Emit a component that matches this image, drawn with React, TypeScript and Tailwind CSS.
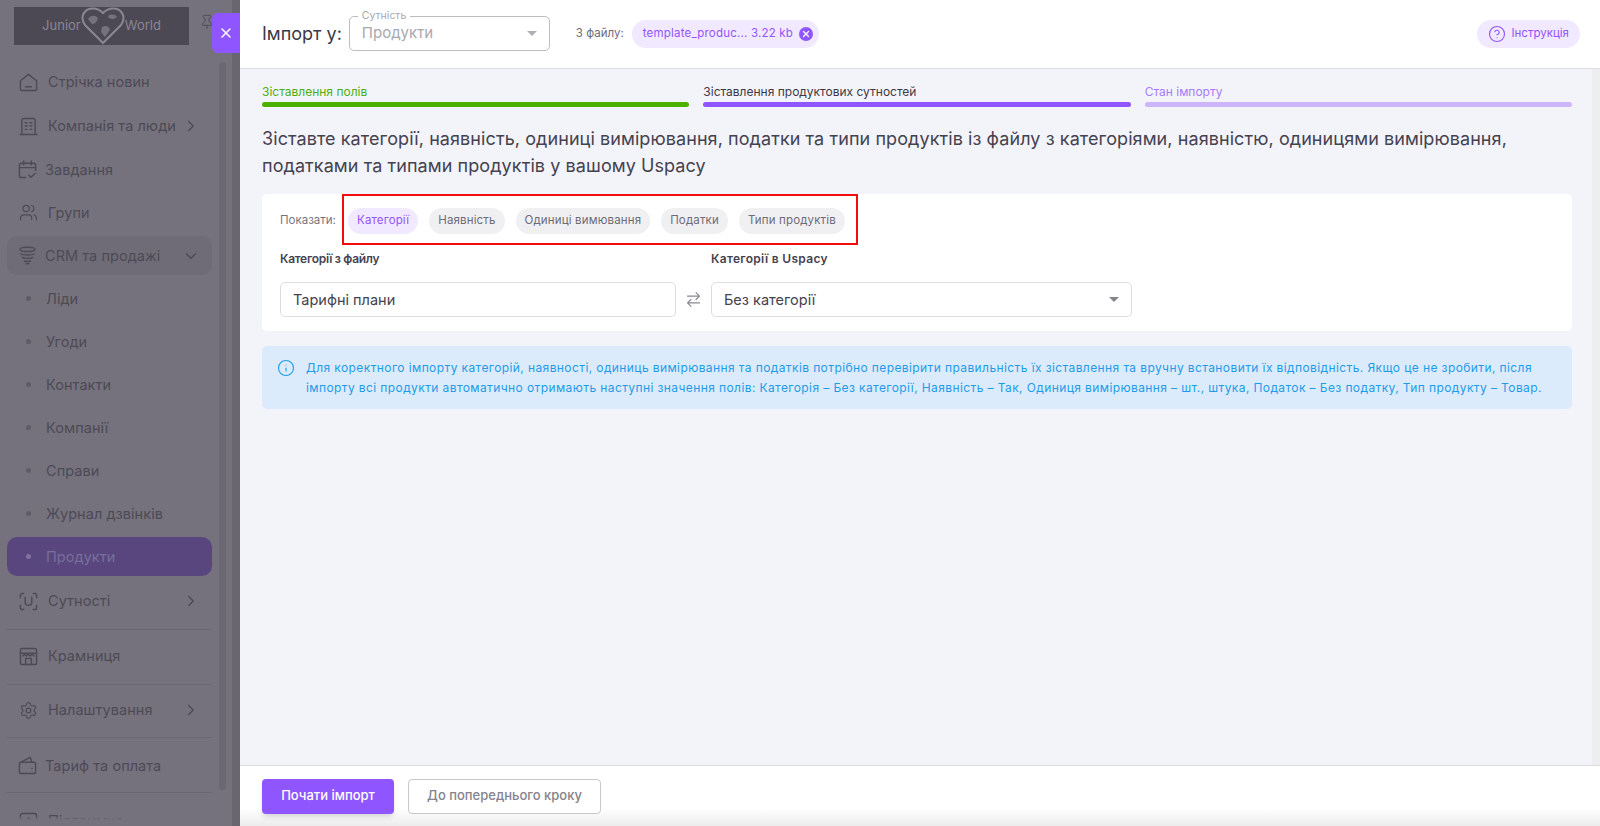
import React from "react";
import { ChevronDown, ChevronRight, CircleHelp, Info, Pin, Settings, Users, X } from "lucide-react";

const iconCls = "w-[19px] h-[19px] shrink-0";

function Glyph({ children }: { children: React.ReactNode }) {
  return (
    <svg viewBox="0 0 20 20" className={iconCls} fill="none" stroke="currentColor" strokeWidth="1.5" strokeLinecap="round" strokeLinejoin="round">
      {children}
    </svg>
  );
}
const HomeIcon = () => (
  <Glyph>
    <path d="M1.5 8.2 10 1.5l8.5 6.7v8.3a2 2 0 0 1-2 2h-13a2 2 0 0 1-2-2z" />
    <path d="M7 14.5h6" />
  </Glyph>
);
const BuildingIcon = () => (
  <Glyph>
    <path d="M3 18V3.5a2 2 0 0 1 2-2h10a2 2 0 0 1 2 2V18M1 18.5h18" />
    <path d="M6.5 6h2M11.5 6h2M6.5 9.5h2M11.5 9.5h2M6.5 13h2M11.5 13h2" />
  </Glyph>
);
const CalendarIcon = () => (
  <Glyph>
    <path d="M8 18.5H3.5a2 2 0 0 1-2-2v-11a2 2 0 0 1 2-2h13a2 2 0 0 1 2 2V11M1.5 8h17M6 1v4M14 1v4" />
    <path d="m11.5 16 2.2 2.2 4.3-4" />
  </Glyph>
);
const StackIcon = () => (
  <Glyph>
    <ellipse cx="10" cy="3.6" rx="7.8" ry="2.2" />
    <path d="M3 8.4c2 1.4 12 1.4 14 0M4.8 12.2c2 1.1 8.4 1.1 10.4 0M6.8 15.8c1.4.7 5 .7 6.4 0M8.6 18.6h2.8" />
  </Glyph>
);
const ScanIcon = () => (
  <Glyph>
    <path d="M5 1.5H3.5a2 2 0 0 0-2 2V6M15 1.5h1.5a2 2 0 0 1 2 2V6M5 18.5H3.5a2 2 0 0 1-2-2V14M15 18.5h1.5a2 2 0 0 0 2-2V14" />
    <path d="M6.5 5.5v5a3.5 3.5 0 0 0 7 0v-5" />
  </Glyph>
);
const StoreIcon = () => (
  <Glyph>
    <rect x="1.5" y="1.5" width="17" height="17" rx="2" />
    <path d="M1.5 6.5h17M4 9.5l2-2 2 2 2-2 2 2 2-2 2 2" />
    <path d="M7 18.5V12h6v6.5" />
  </Glyph>
);
const WalletIcon = () => (
  <Glyph>
    <rect x="1.5" y="6.5" width="17" height="12" rx="2" />
    <path d="M3 6.5 13 1.5l1.5 5" />
    <path d="M14.5 13h.5" />
  </Glyph>
);
const SupportIcon = () => (
  <Glyph>
    <rect x="1.5" y="1.5" width="17" height="15" rx="2.5" />
    <path d="m7 9 3-3 3 3" />
  </Glyph>
);

type Row = { label: string; h: string; icon?: React.ReactNode; chevron?: "right" | "down"; sub?: boolean; active?: boolean; hover?: boolean; divider?: boolean; tight?: boolean; pb?: string };

const rows: Row[] = [
  { label: "Стрічка новин", h: "h-[44px]", icon: <HomeIcon /> },
  { label: "Компанія та люди", h: "h-[44px]", icon: <BuildingIcon />, chevron: "right" },
  { label: "Завдання", h: "h-[43px]", icon: <CalendarIcon />, tight: true },
  { label: "Групи", h: "h-[43px]", icon: <Users className={iconCls} strokeWidth={1.5} /> },
  { label: "CRM та продажі", h: "h-[43px]", icon: <StackIcon />, chevron: "down", hover: true, tight: true },
  { label: "Ліди", h: "h-[43px]", sub: true },
  { label: "Угоди", h: "h-[43px]", sub: true },
  { label: "Контакти", h: "h-[43px]", sub: true },
  { label: "Компанії", h: "h-[43px]", sub: true },
  { label: "Справи", h: "h-[43px]", sub: true },
  { label: "Журнал дзвінків", h: "h-[43px]", sub: true },
  { label: "Продукти", h: "h-[43px]", sub: true, active: true },
  { label: "Сутності", h: "h-[52px]", icon: <ScanIcon />, chevron: "right", divider: true, pb: "pb-[6px]" },
  { label: "Крамниця", h: "h-[55px]", icon: <StoreIcon />, divider: true, pb: "pb-[3px]" },
  { label: "Налаштування", h: "h-[53px]", icon: <Settings className={iconCls} strokeWidth={1.5} />, chevron: "right", divider: true, pb: "pb-[3px]" },
  { label: "Тариф та оплата", h: "h-[55px]", icon: <WalletIcon />, divider: true, tight: true },
  { label: "Підтримка", h: "h-[56px]", icon: <SupportIcon /> },
];

function Sidebar() {
  return (
    <aside className="w-[240px] shrink-0 h-full bg-[#75727d] text-[#4d4a56] flex flex-col overflow-hidden relative">
      <div className="h-[60px] shrink-0 pt-[7px] pl-[14px] flex items-start">
        <div className="w-[175px] h-[38px] bg-[#4c4854] flex items-center justify-center text-[13px] text-[#8a8792]">
          <span>Junior</span>
          <svg viewBox="0 0 44 38" className="w-[44px] h-[38px]">
            <path d="M22 36 4 18C-2 9 4 1.500 12 1.500c4.500 0 7.500 2 10 4.500 2.500-2.500 5.500-4.500 10-4.500 8 0 14 7.500 8 16.500z" fill="#4c4854" stroke="#8a8792" strokeWidth="2" />
            <path d="M21 20c4-2 7-1 8 3l-5 7-4-5zM7 12c3-4 7-4 10-1-1 4-3 6-6 6zM27 9c3-2 7-2 9 1-2 2-5 3-8 1z" fill="#75727d" />
          </svg>
          <span>World</span>
        </div>
        <Pin className="w-[16px] h-[16px] ml-[10px] mt-[7px] text-[#4f4c58]" strokeWidth={1.5} />
      </div>
      <div className="flex-1 min-h-0 flex flex-col pl-[7px]">
        {rows.map((r) => (
          <div key={r.label} className={`${r.h} ${r.pb ?? ""} shrink-0 w-[205px] relative flex items-center`}>
            <div className={`w-full flex items-center rounded-[10px] h-[39px] ${r.active ? "bg-[#5a467f] text-[#75709a]" : ""} ${r.hover ? "bg-[#6f6c77]" : ""} ${r.sub ? "pl-[19px]" : r.tight ? "pl-[11px]" : "pl-[12px]"} pr-[12px]`}>
              {r.sub ? (
                <span className={`w-[5px] h-[5px] rounded-full ${r.active ? "bg-[#85719f]" : "bg-[#5f5c68]"} mr-[15px]`} />
              ) : (
                <span className="w-[19px] flex justify-center shrink-0">{r.icon}</span>
              )}
              <span className={`text-[14.5px] tracking-[0.05px] whitespace-nowrap ${r.sub ? "" : r.tight ? "ml-[8px]" : "ml-[10px]"}`}>{r.label}</span>
              {r.chevron === "right" && <ChevronRight className="w-[18px] h-[18px] ml-auto" strokeWidth={1.8} />}
              {r.chevron === "down" && <ChevronDown className="w-[18px] h-[18px] ml-auto" strokeWidth={1.8} />}
            </div>
            {r.divider && <div className="absolute left-0 right-0 bottom-0 h-px bg-[#6a6772]" />}
          </div>
        ))}
      </div>
      <div className="absolute left-0 right-0 bottom-0 h-[10px] bg-gradient-to-b from-transparent to-[#75727d] to-40%" />
      <div className="absolute right-[14px] top-[62px] bottom-[36px] w-[7px] rounded-full bg-[#6b6873]" />
      <div className="absolute right-0 top-0 bottom-0 w-[8px] bg-[#696670]" />
      <button className="absolute right-0 top-[13px] w-[28px] h-[40px] bg-[#8f56ff] rounded-l-[6px] flex items-center justify-center text-white">
        <X className="w-[16px] h-[16px]" strokeWidth={2.2} />
      </button>
    </aside>
  );
}

function Step({ label, text, bar }: { label: string; text: string; bar: string }) {
  return (
    <div className="w-[428px]">
      <div className={`text-[12px] leading-[15px] ${text}`}>{label}</div>
      <div className={`h-[5px] rounded-full mt-[3px] ${bar}`} />
    </div>
  );
}

function Chip({ label, active }: { label: string; active?: boolean }) {
  return (
    <span className={`h-[26px] px-[9px] rounded-full flex items-center text-[11.5px] tracking-[0.15px] whitespace-nowrap ${active ? "bg-[#f1e9ff] text-[#9155fd]" : "bg-[#f0f0f2] text-[#6e6b78]"}`}>{label}</span>
  );
}

export default function App() {
  return (
    <div className="w-screen h-screen overflow-hidden flex bg-white font-['Inter',sans-serif]">
      <Sidebar />
      <main className="flex-1 min-w-0 flex flex-col h-full">
        <header className="h-[69px] shrink-0 border-b border-[#dddde0] bg-white flex items-center pl-[22px] pr-[20px] pb-[1px]">
          <span className="text-[18px] text-[#3c3946] mr-[7px]">Імпорт у:</span>
          <div className="relative w-[201px] h-[35px] border border-[#bdbcc3] rounded-[5px] flex items-center pl-[12px] pr-[12px] text-[#a9a8ae] text-[15px]">
            <span className="absolute -top-[8px] left-[8px] bg-white px-[4px] text-[10.5px] text-[#a9a8ae] leading-[14px]">Сутність</span>
            <span>Продукти</span>
            <span className="ml-auto w-0 h-0 border-x-[5px] border-x-transparent border-t-[5px] border-t-[#b0afb5]" />
          </div>
          <span className="ml-[26px] text-[11.5px] text-[#6e6b78]">З файлу:</span>
          <div className="ml-[8px] h-[28px] rounded-full bg-[#f1e9ff] text-[#9155fd] text-[11.5px] flex items-center pl-[11px] pr-[6px]">
            <span className="tracking-[0.2px]">template_produc... 3.22 kb</span>
            <span className="ml-[6px] w-[14px] h-[14px] rounded-full bg-[#8f56ff] flex items-center justify-center text-white">
              <X className="w-[10px] h-[10px]" strokeWidth={3} />
            </span>
          </div>
          <div className="ml-auto h-[28px] rounded-full bg-[#f1e9ff] text-[#9155fd] text-[11.5px] flex items-center pl-[11px] pr-[11px] gap-[5px]">
            <CircleHelp className="w-[18px] h-[18px]" strokeWidth={1.5} />
            <span>Інструкція</span>
          </div>
        </header>

        <div className="flex-1 min-h-0 bg-[#f3f4f9] flex">
          <div className="flex-1 min-w-0 pl-[22px] pr-[20px] pt-[15px]">
            <div className="flex gap-[14px]">
              <Step label="Зіставлення полів" text="text-[#4caf10]" bar="bg-[#4bb200]" />
              <Step label="Зіставлення продуктових сутностей" text="text-[#3c3946]" bar="bg-[#8f56ff]" />
              <Step label="Стан імпорту" text="text-[#a77cfb]" bar="bg-[#cdb4fb]" />
            </div>
            <h1 className="mt-[18px] text-[18px] leading-[27px] font-normal tracking-[0.08px] text-[#45424f]">
              Зіставте категорії, наявність, одиниці вимірювання, податки та типи продуктів із файлу з категоріями, наявністю, одиницями вимірювання, податками та типами продуктів у вашому Uspacy
            </h1>
            <section className="mt-[15px] h-[137px] bg-white rounded-[5px] px-[18px] flex flex-col">
              <div className="flex items-start h-[50px]">
                <span className="text-[11.5px] text-[#77747f] w-[62px] shrink-0 h-[51px] pt-[3px] flex items-center">Показати:</span>
                <div className="h-[51px] w-[516px] border-2 border-[#f20d0d] flex items-center gap-[11px] pl-[4px] pt-[3px]">
                  <Chip label="Категорії" active />
                  <Chip label="Наявність" />
                  <Chip label="Одиниці вимювання" />
                  <Chip label="Податки" />
                  <Chip label="Типи продуктів" />
                </div>
              </div>
              <div className="flex gap-[35px] mt-[7px] text-[12px] font-semibold text-[#45424f] leading-[16px]">
                <span className="w-[396px] tracking-[-0.3px]">Категорії з файлу</span>
                <span className="tracking-[0.3px]">Категорії в Uspacy</span>
              </div>
              <div className="flex items-center mt-[15px]">
                <div className="w-[396px] h-[35px] border border-[#dedde1] rounded-[5px] flex items-center px-[12px] text-[14.5px] text-[#45424f]">Тарифні плани</div>
                <svg viewBox="0 0 20 20" className="w-[17px] h-[17px] ml-[9px] mr-[9px] text-[#8a8890]" fill="none" stroke="currentColor" strokeWidth="1.4" strokeLinecap="round" strokeLinejoin="round">
                  <path d="M3 6h14M13 2l4 4-4 4M17 14H3M7 10l-4 4 4 4" />
                </svg>
                <div className="w-[421px] h-[35px] border border-[#dedde1] rounded-[5px] flex items-center px-[12px] text-[14.5px] text-[#45424f]">
                  <span>Без категорії</span>
                  <span className="ml-auto w-0 h-0 border-x-[5px] border-x-transparent border-t-[5px] border-t-[#85838c]" />
                </div>
              </div>
            </section>
            <section className="mt-[15px] h-[63px] bg-[#dcebfc] rounded-[5px] flex pl-[15px] pr-[20px] pt-[12px] text-[#1e9be8] gap-[11px]">
              <Info className="w-[18px] h-[18px] shrink-0 mt-[1px]" strokeWidth={1.5} />
              <p className="text-[12px] leading-[20px] tracking-[0.4px]">
                Для коректного імпорту категорій, наявності, одиниць вимірювання та податків потрібно перевірити правильність їх зіставлення та вручну встановити їх відповідність. Якщо це не зробити, після імпорту всі продукти автоматично отримають наступні значення полів: Категорія – Без категорії, Наявність – Так, Одиниця вимірювання – шт., штука, Податок – Без податку, Тип продукту – Товар.
              </p>
            </section>
          </div>
          <div className="w-[8px] shrink-0 bg-[#eeeef1]" />
        </div>

        <footer className="h-[61px] shrink-0 border-t border-[#dddde0] bg-gradient-to-b from-white from-70% to-[#ececec] flex items-center pl-[22px] gap-[14px]">
          <button className="w-[132px] h-[35px] rounded-[4px] bg-[#8f56ff] text-white text-[13px] font-medium shadow-md">Почати імпорт</button>
          <button className="w-[193px] h-[35px] rounded-[4px] border border-[#c8c7cc] text-[#85838c] text-[13px] font-medium bg-white">До попереднього кроку</button>
        </footer>
      </main>
    </div>
  );
}
